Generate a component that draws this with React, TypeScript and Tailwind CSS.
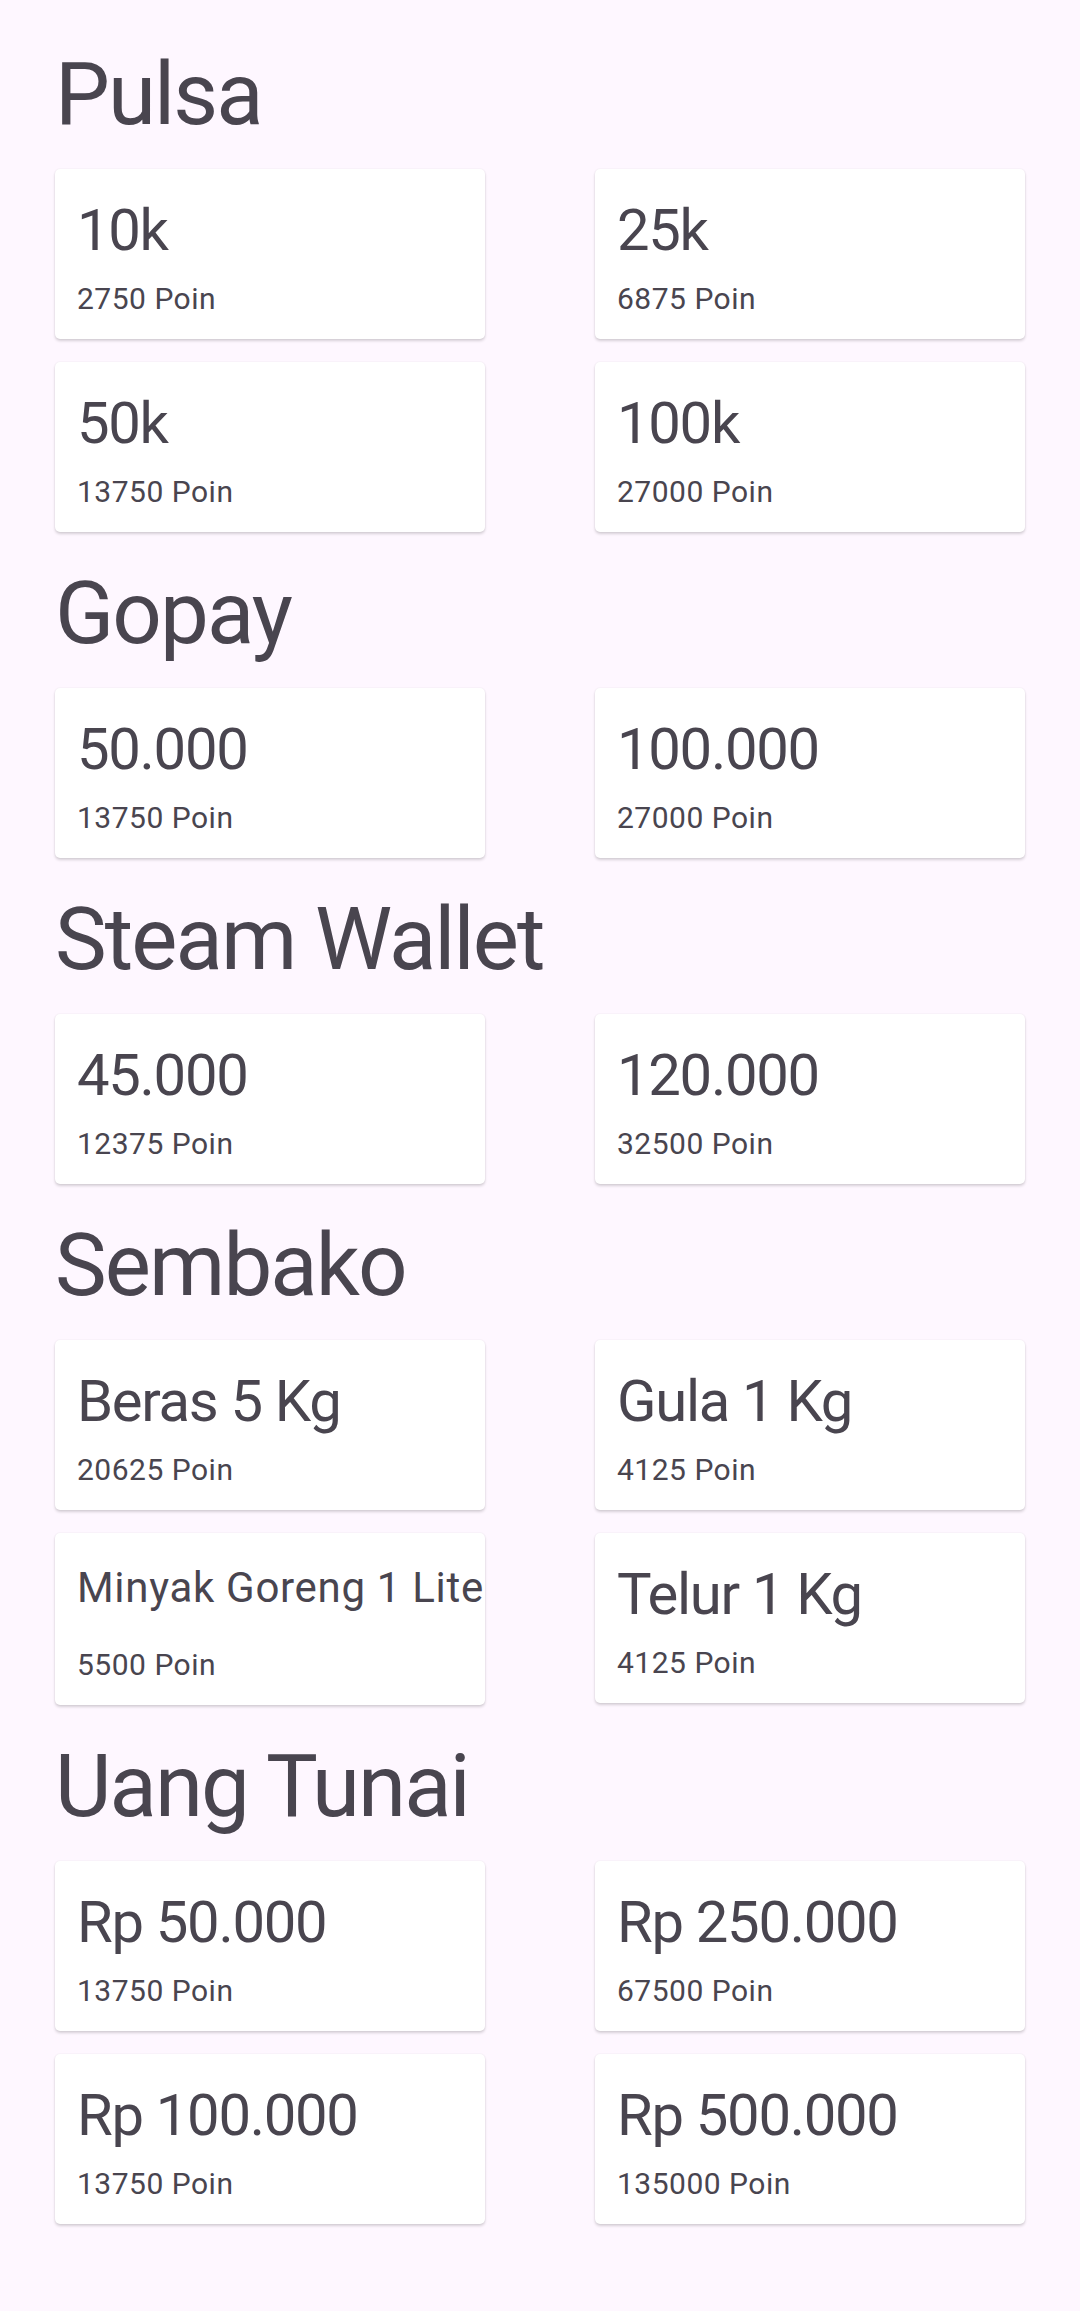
type Item = { name: string; points: string; small?: boolean };

const sections: { title: string; items: Item[] }[] = [
  {
    title: "Pulsa",
    items: [
      { name: "10k", points: "2750 Poin" },
      { name: "25k", points: "6875 Poin" },
      { name: "50k", points: "13750 Poin" },
      { name: "100k", points: "27000 Poin" },
    ],
  },
  {
    title: "Gopay",
    items: [
      { name: "50.000", points: "13750 Poin" },
      { name: "100.000", points: "27000 Poin" },
    ],
  },
  {
    title: "Steam Wallet",
    items: [
      { name: "45.000", points: "12375 Poin" },
      { name: "120.000", points: "32500 Poin" },
    ],
  },
  {
    title: "Sembako",
    items: [
      { name: "Beras 5 Kg", points: "20625 Poin" },
      { name: "Gula 1 Kg", points: "4125 Poin" },
      { name: "Minyak Goreng 1 Liter", points: "5500 Poin", small: true },
      { name: "Telur 1 Kg", points: "4125 Poin" },
    ],
  },
  {
    title: "Uang Tunai",
    items: [
      { name: "Rp 50.000", points: "13750 Poin" },
      { name: "Rp 250.000", points: "67500 Poin" },
      { name: "Rp 100.000", points: "13750 Poin" },
      { name: "Rp 500.000", points: "135000 Poin" },
    ],
  },
];

function RewardCard({ item }: { item: Item }) {
  return (
    <div className="w-[430px] overflow-hidden rounded-[5px] bg-white pl-[22px] pt-[27px] pb-[23px] shadow-[0_2px_3px_rgba(0,0,0,0.16),0_0_2px_rgba(0,0,0,0.07)]">
      {item.small ? (
        <p className="h-[70px] whitespace-nowrap pt-[3px] text-[42px] leading-[49px] tracking-[0.7px]">
          {item.name}
        </p>
      ) : (
        <p className="whitespace-nowrap text-[58px] leading-[68px] tracking-[-1.3px]">{item.name}</p>
      )}
      <p className="mt-[17px] text-[30px] leading-[35px] tracking-[0.5px]">{item.points}</p>
    </div>
  );
}

export default function App() {
  return (
    <main className="min-h-screen bg-[#fef7ff] pt-[43px] pb-[80px] font-['Roboto',sans-serif] text-[#49454f]">
      {sections.map((section, i) => (
        <section key={section.title} className={i === 0 ? "" : "mt-[30px]"}>
          <h1 className="pl-[55px] text-[87px] leading-[103px] tracking-[-1.9px]">{section.title}</h1>
          <div className="mt-[23px] grid grid-cols-2 gap-y-[23px]">
            {section.items.map((item) => (
              <div key={item.name} className="pl-[55px]">
                <RewardCard item={item} />
              </div>
            ))}
          </div>
        </section>
      ))}
    </main>
  );
}
